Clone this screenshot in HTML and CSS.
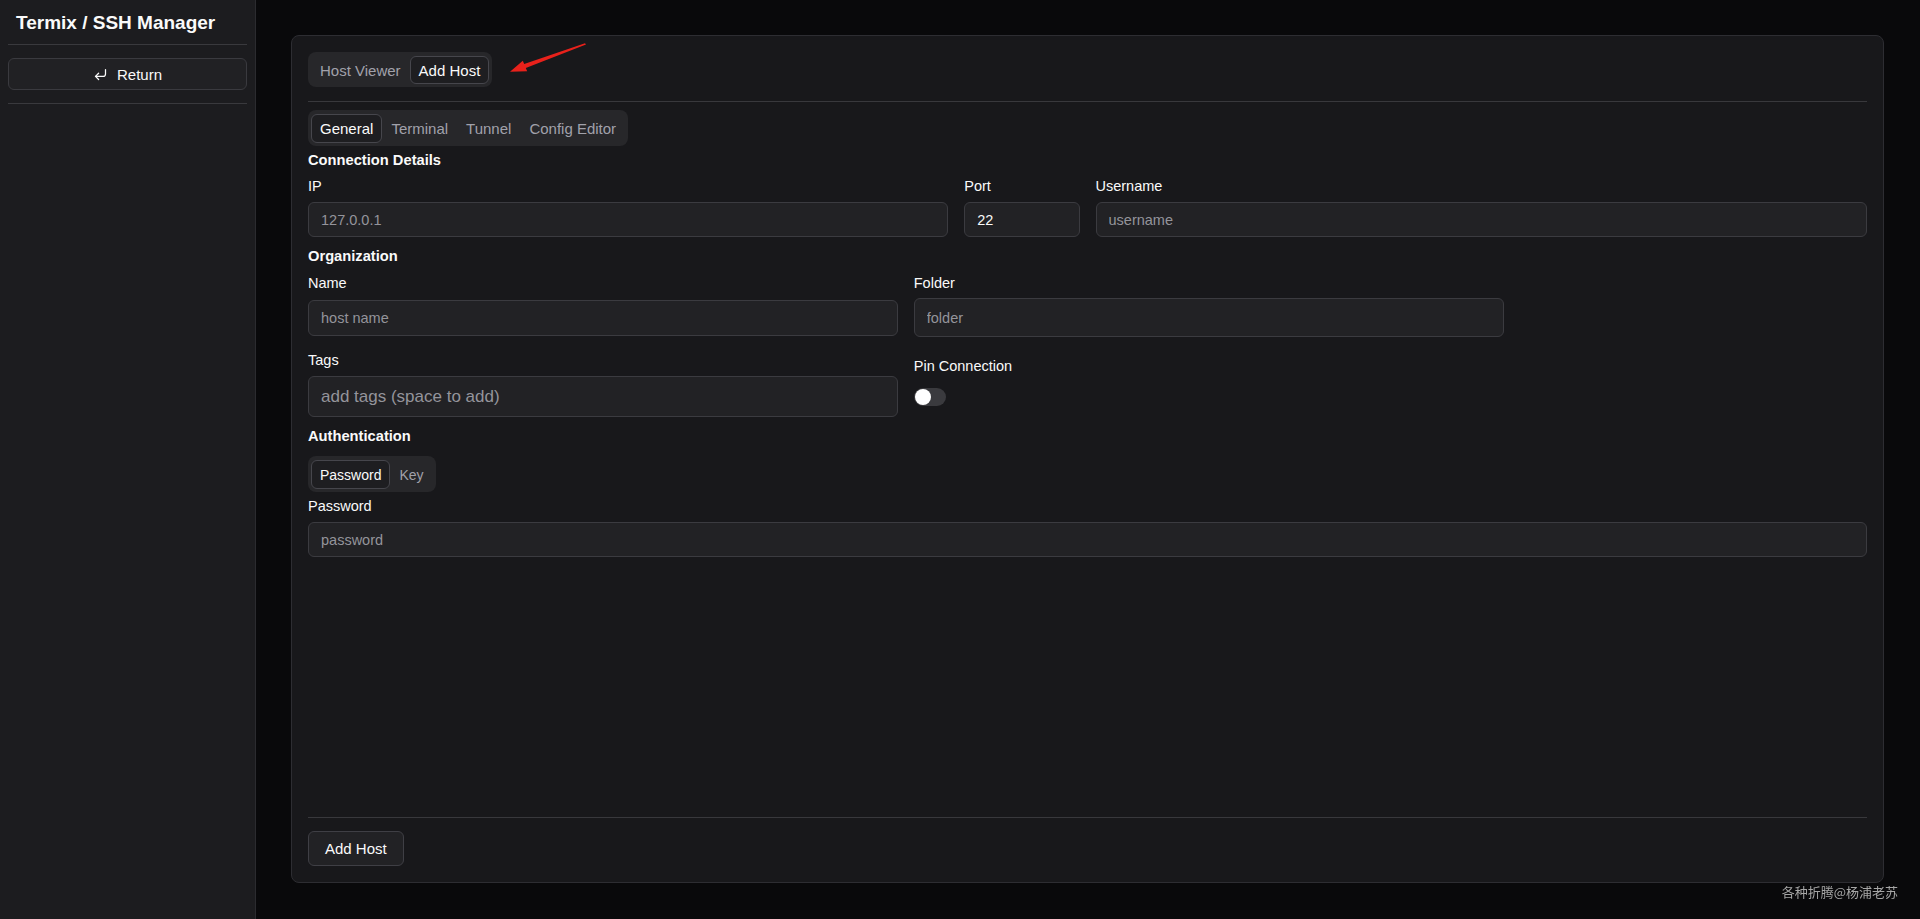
FILE: index.html
```html
<!DOCTYPE html>
<html lang="en">
<head>
    <meta charset="UTF-8">
    <title>Termix / SSH Manager</title>
    <link rel="stylesheet" href="styles.css">
</head>
<body>
    <aside class="sidebar">
        <div class="sidebar-header">Termix / SSH Manager</div>
        <div class="sidebar-sep"></div>
        <div class="sidebar-body">
            <button class="return-btn">
                <svg class="return-icon" viewBox="0 0 24 24" fill="none" stroke="currentColor" stroke-width="2" stroke-linecap="round" stroke-linejoin="round">
                    <polyline points="9 10 4 15 9 20"></polyline>
                    <path d="M20 4v7a4 4 0 0 1-4 4H4"></path>
                </svg>
                Return
            </button>
        </div>
        <div class="sidebar-sep"></div>
    </aside>

    <main class="main">
        <div class="card">
            <div class="card-body">
                <div class="tabs">
                    <button class="tab">Host Viewer</button>
                    <button class="tab active">Add Host</button>
                </div>
                <div class="sep"></div>

                <div class="tabs tabs-sub">
                    <button class="tab active">General</button>
                    <button class="tab">Terminal</button>
                    <button class="tab">Tunnel</button>
                    <button class="tab">Config Editor</button>
                </div>

                <h3 class="section-title first">Connection Details</h3>
                <div class="grid-12">
                    <div class="field span-5">
                        <label>IP</label>
                        <input type="text" placeholder="127.0.0.1">
                    </div>
                    <div class="field span-1">
                        <label>Port</label>
                        <input type="text" value="22">
                    </div>
                    <div class="field span-6">
                        <label>Username</label>
                        <input type="text" placeholder="username">
                    </div>
                </div>

                <h3 class="section-title">Organization</h3>
                <div class="grid-26">
                    <div class="field span-10">
                        <label>Name</label>
                        <input type="text" placeholder="host name" class="name-input">
                    </div>
                    <div class="field span-10">
                        <label>Folder</label>
                        <input type="text" placeholder="folder" class="folder-input">
                    </div>
                    <div class="field span-10">
                        <label>Tags</label>
                        <input type="text" placeholder="add tags (space to add)" class="tags-input">
                    </div>
                    <div class="field span-10 pin-field">
                        <label>Pin Connection</label>
                        <span class="switch"><span class="thumb"></span></span>
                    </div>
                </div>

                <h3 class="section-title">Authentication</h3>
                <div class="tabs tabs-auth">
                    <button class="tab active">Password</button>
                    <button class="tab">Key</button>
                </div>
                <div class="field password-field">
                    <label>Password</label>
                    <input type="password" placeholder="password">
                </div>
            </div>

            <div class="card-footer">
                <button class="submit-btn">Add Host</button>
            </div>
        </div>
    </main>

    <svg class="annot-arrow" viewBox="505 40 85 36">
        <polygon points="510,71.7 527.2,71.3 525.8,68.1 586,44.5 585,43.3 524.2,64.1 522.8,60.8" fill="#e8211b"></polygon>
    </svg>

    <div class="watermark">各种折腾@杨浦老苏</div>
</body>
</html>
```

FILE: styles.css
```css
* {
    box-sizing: border-box;
}

body {
    margin: 0;
    height: 100vh;
    display: flex;
    background-color: #09090b;
    color: #fafafa;
    font-family: "Liberation Sans", Arial, sans-serif;
    overflow: hidden;
}

button, input {
    font-family: inherit;
    color: inherit;
}

/* sidebar */

.sidebar {
    width: 256px;
    flex-shrink: 0;
    background: #1c1c1f;
    border-right: 1px solid #2b2b2f;
}

.sidebar-header {
    padding: 11px 16px 9px;
    font-size: 19px;
    font-weight: bold;
    line-height: 24px;
    white-space: nowrap;
}

.sidebar-sep {
    height: 1px;
    margin: 0 8px;
    background: #39393d;
}

.sidebar-body {
    padding: 13px 8px;
}

.return-btn {
    width: 100%;
    height: 32px;
    display: flex;
    align-items: center;
    justify-content: center;
    background: #212124;
    border: 1px solid #3a3a3f;
    border-radius: 6px;
    font-size: 15px;
}

.return-icon {
    width: 15px;
    height: 15px;
    margin-right: 9px;
}

/* main card */

.main {
    flex: 1;
    padding: 35px 36px 36px 35px;
    display: flex;
}

.card {
    flex: 1;
    display: flex;
    flex-direction: column;
    background: #18181b;
    border: 1px solid #2d2d32;
    border-radius: 8px;
    padding: 16px;
}

.card-body {
    flex: 1;
}

.tabs {
    display: inline-flex;
    height: 35px;
    padding: 4px 3px 3px;
    background: #27272a;
    border-radius: 8px;
}

.tabs-sub,
.tabs-auth {
    height: 36px;
}

.tab {
    height: 100%;
    padding: 0 8px;
    background: transparent;
    border: 1px solid transparent;
    border-radius: 6px;
    color: #a1a1aa;
    font-size: 15px;
}

.tab.active {
    background: #1e1e21;
    border-color: #46464c;
    color: #fafafa;
}

.tabs-auth .tab {
    font-size: 14px;
}

.sep {
    height: 1px;
    margin: 14px 0 8px;
    background: #38383c;
}

.section-title {
    margin: 9px 0 0;
    font-size: 14.7px;
    font-weight: bold;
    line-height: 20px;
}

.section-title.first {
    margin-top: 4px;
}

.grid-12 {
    display: grid;
    grid-template-columns: repeat(12, 1fr);
    column-gap: 16px;
    margin-top: 6px;
}

.grid-26 {
    display: grid;
    grid-template-columns: repeat(26, 1fr);
    column-gap: 16px;
    row-gap: 13px;
    margin-top: 7px;
}

.span-1 { grid-column: span 1; }
.span-5 { grid-column: span 5; }
.span-6 { grid-column: span 6; }
.span-10 { grid-column: span 10; }

.field {
    display: flex;
    flex-direction: column;
    align-items: flex-start;
}

.field label {
    font-size: 14.5px;
    line-height: 20px;
    margin-bottom: 6px;
}

.field input {
    width: 100%;
    height: 35px;
    padding: 0 12px;
    background: #222225;
    border: 1px solid #3b3b40;
    border-radius: 6px;
    font-size: 14.5px;
    outline: none;
}

.field input::placeholder {
    color: #94949b;
}

.grid-26 .field label {
    margin-bottom: 7px;
}

.field .name-input {
    height: 36px;
}

.field .folder-input {
    height: 39px;
    margin-top: -2px;
}

.grid-26 .field .tags-input {
    height: 41px;
    font-size: 17px;
}

.grid-26 .field:nth-child(3) label {
    margin-bottom: 6px;
}

.pin-field {
    padding-top: 6px;
}

.grid-26 .pin-field label {
    margin-bottom: 12px;
}

.switch {
    position: relative;
    width: 32px;
    height: 18px;
    border-radius: 9px;
    background: #3a3a3e;
}

.thumb {
    position: absolute;
    left: 1px;
    top: 1px;
    width: 16px;
    height: 16px;
    border-radius: 50%;
    background: #ffffff;
}

.tabs-auth {
    margin-top: 10px;
}

.password-field {
    margin-top: 4px;
}

.card-footer {
    border-top: 1px solid #38383c;
    padding-top: 13px;
}

.submit-btn {
    height: 35px;
    padding: 0 16px;
    background: #222225;
    border: 1px solid #3f3f45;
    border-radius: 6px;
    font-size: 15px;
}

/* annotation overlay */

.annot-arrow {
    position: absolute;
    left: 505px;
    top: 40px;
    width: 85px;
    height: 36px;
    pointer-events: none;
}

.watermark {
    position: fixed;
    right: 22px;
    bottom: 19px;
    font-family: "Noto Sans CJK SC", sans-serif;
    font-size: 13px;
    line-height: 16px;
    color: #a6a6a6;
}
```
